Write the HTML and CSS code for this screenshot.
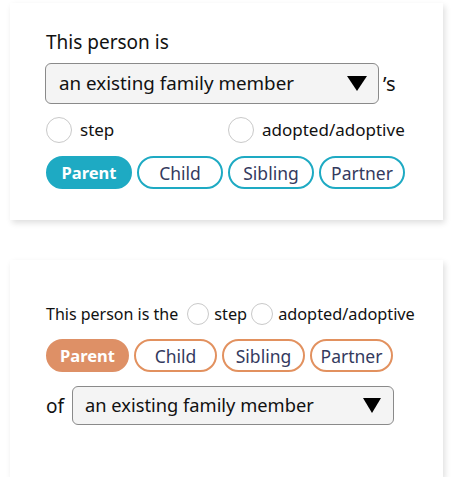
FILE: index.html
```html
<!DOCTYPE html>
<html lang="en">
<head>
<meta charset="utf-8">
<title>Relationship picker</title>
<link rel="stylesheet" href="styles.css">
</head>
<body>
<div class="page">
  <section class="card card-one">
    <div class="heading">This person is</div>
    <div class="select-row">
      <div class="select select-lg">
        <span class="select-text">an existing family member</span>
        <svg class="caret" width="20" height="15" viewBox="0 0 20 15"><path d="M0 0H20L10 15Z" fill="#000"/></svg>
      </div>
      <span class="poss">’s</span>
    </div>
    <div class="radio-grid">
      <label class="radio"><span class="circle"></span><span class="rlabel">step</span></label>
      <label class="radio"><span class="circle"></span><span class="rlabel">adopted/adoptive</span></label>
    </div>
    <div class="btns btns-teal">
      <span class="btn active">Parent</span>
      <span class="btn">Child</span>
      <span class="btn">Sibling</span>
      <span class="btn">Partner</span>
    </div>
  </section>

  <section class="card card-two">
    <div class="inline-row">
      <span class="lead">This person is the</span>
      <label class="radio radio-sm"><span class="circle"></span><span class="rlabel">step</span></label>
      <label class="radio radio-sm"><span class="circle"></span><span class="rlabel">adopted/adoptive</span></label>
    </div>
    <div class="btns btns-orange">
      <span class="btn active">Parent</span>
      <span class="btn">Child</span>
      <span class="btn">Sibling</span>
      <span class="btn">Partner</span>
    </div>
    <div class="of-row">
      <span class="of">of</span>
      <div class="select select-md">
        <span class="select-text">an existing family member</span>
        <svg class="caret" width="18" height="15" viewBox="0 0 18 15"><path d="M0 0H18L9 15Z" fill="#000"/></svg>
      </div>
    </div>
  </section>
</div>
</body>
</html>
```

FILE: styles.css
```css
* { box-sizing: border-box; }
html, body { margin: 0; padding: 0; background: #fff; }
body {
  font-family: "Noto Sans", "Open Sans", sans-serif;
  color: #111;
}
.page {
  padding: 3px 10px 0 10px;
  display: flex;
  flex-direction: column;
  gap: 40px;
}
.card {
  width: 433px;
  height: 217px;
  background: #fff;
  box-shadow: 2px 3px 6px rgba(0, 0, 0, 0.13);
  padding-left: 36px;
  display: flex;
  flex-direction: column;
}
.card-one { padding-top: 27px; }
.heading {
  font-size: 19px;
  line-height: 24px;
}
.select-row {
  margin-top: 9px;
  display: flex;
  align-items: center;
}
.select {
  display: flex;
  align-items: center;
  justify-content: space-between;
  border: 1.5px solid #8a8a8a;
  border-radius: 6px;
  background: #f4f4f4;
}
.select-lg {
  width: 334px;
  height: 41px;
  margin-left: -1px;
  padding: 0 11px 0 13px;
  font-size: 18.8px;
}
.select-md {
  width: 322px;
  height: 39px;
  padding: 0 12px 0 12px;
  font-size: 18.3px;
}
.select-text { line-height: 1; }
.caret { display: block; flex: none; }
.poss {
  margin-left: 4px;
  font-size: 20px;
  line-height: 1;
}
.radio-grid {
  margin-top: 13px;
  display: grid;
  grid-template-columns: 182px auto;
  height: 26px;
}
.radio {
  display: flex;
  align-items: center;
  gap: 8px;
  font-size: 17px;
  line-height: 26px;
}
.circle {
  width: 26px;
  height: 26px;
  border-radius: 50%;
  border: 1.5px solid #c9c9c9;
  background: #fff;
  flex: none;
}
.radio-sm { gap: 5px; }
.radio-sm .circle { width: 22px; height: 22px; }
.btns {
  display: grid;
  gap: 5px;
}
.btns-teal {
  margin-top: 13px;
  grid-template-columns: repeat(4, 86px);
}
.btns-orange {
  margin-top: 14px;
  grid-template-columns: repeat(4, 83px);
}
.btn {
  height: 33px;
  border-radius: 17px;
  border: 2px solid;
  display: flex;
  align-items: center;
  justify-content: center;
  font-size: 17.5px;
  color: #343a5e;
  background: #fff;
}
.btns-teal .btn { border-color: #1eaac3; }
.btns-orange .btn { border-color: #e2915f; }
.btn.active { color: #fff; font-weight: 700; font-size: 16.5px; }
.btns-teal .btn.active { background: #1eaac3; }
.btns-orange .btn.active { background: #de9066; border-color: #de9066; }
.card-two { padding-top: 43px; }
.inline-row {
  display: flex;
  align-items: center;
  height: 22px;
  font-size: 16px;
}
.lead { margin-right: 9px; }
.inline-row .radio { font-size: 16.3px; margin-right: 4px; }
.of-row {
  margin-top: 14px;
  display: flex;
  align-items: center;
}
.of {
  font-size: 19px;
  width: 26px;
}
```
